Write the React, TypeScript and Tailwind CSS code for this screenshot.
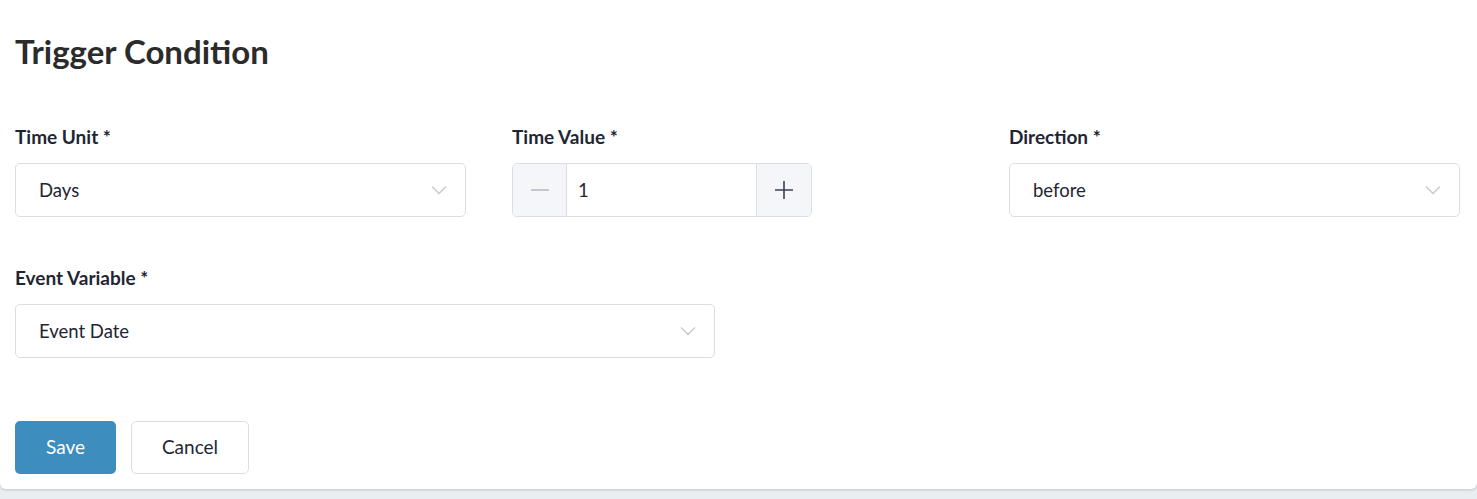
import { useState } from 'react';

const Chevron = () => (
  <svg width="16" height="10" viewBox="0 0 16 10" fill="none" className="text-[#c4c7cf]">
    <path d="M1 1.5l7 7 7-7" stroke="currentColor" strokeWidth="1.3" />
  </svg>
);

const SelectBox = ({ value }: { value: string }) => (
  <div className="h-[54px] flex items-center justify-between pl-[23px] pr-[18px] border border-[#dcdee6] rounded-[5px] bg-white text-[18.5px] text-[#1f2633]">
    <span className="pt-[1px]">{value}</span>
    <Chevron />
  </div>
);

const Label = ({ children }: { children: string }) => (
  <label className="block text-[19px] font-bold text-[#1f2633] mb-[15px] leading-[22px]">{children}</label>
);

export default function App() {
  const [valor, setValor] = useState(1);

  return (
    <div className="min-h-[499px] bg-[#e9eef3] font-['Lato','Liberation_Sans',sans-serif]">
      <div className="bg-white rounded-b-[6px] shadow-[0_1px_3px_rgba(0,0,0,0.18)] pl-[15px] pr-[17px] pt-[31px] pb-[15px] h-[489px]">
        <h1 className="text-[33px] font-bold text-[#2b2b2b] leading-[40px] mb-[55px]">Trigger Condition</h1>

        <div className="grid grid-cols-3 gap-x-[46px]">
          <div>
            <Label>Time Unit *</Label>
            <SelectBox value="Days" />
          </div>
          <div>
            <Label>Time Value *</Label>
            <div className="w-[300px] h-[54px] flex border border-[#dcdee6] rounded-[5px] overflow-hidden">
              <button
                onClick={() => setValor(Math.max(0, valor - 1))}
                className="w-[54px] bg-[#f4f6fa] border-r border-[#dcdee6] flex items-center justify-center"
              >
                <span className="block w-[18px] h-[2px] bg-[#c3c7cf]" />
              </button>
              <div className="flex-1 flex items-center pl-[11px] pt-[1px] text-[18.5px] text-[#1f2633]">{valor}</div>
              <button
                onClick={() => setValor(valor + 1)}
                className="w-[55px] bg-[#f4f6fa] border-l border-[#dcdee6] flex items-center justify-center"
              >
                <svg width="18" height="18" viewBox="0 0 18 18" className="text-[#3a4352]">
                  <path d="M9 0v18M0 9h18" stroke="currentColor" strokeWidth="1.6" />
                </svg>
              </button>
            </div>
          </div>
          <div>
            <Label>Direction *</Label>
            <SelectBox value="before" />
          </div>
        </div>

        <div className="grid grid-cols-2 gap-x-[46px] mt-[50px]">
          <div>
            <Label>Event Variable *</Label>
            <SelectBox value="Event Date" />
          </div>
        </div>

        <div className="flex gap-[15px] mt-[63px]">
          <button className="w-[101px] h-[53px] rounded-[5px] bg-[#3d8dbe] text-white text-[19px]">Save</button>
          <button className="w-[118px] h-[53px] rounded-[5px] bg-white border border-[#dcdee6] text-[#1f2633] text-[19px]">Cancel</button>
        </div>
      </div>
    </div>
  );
}
